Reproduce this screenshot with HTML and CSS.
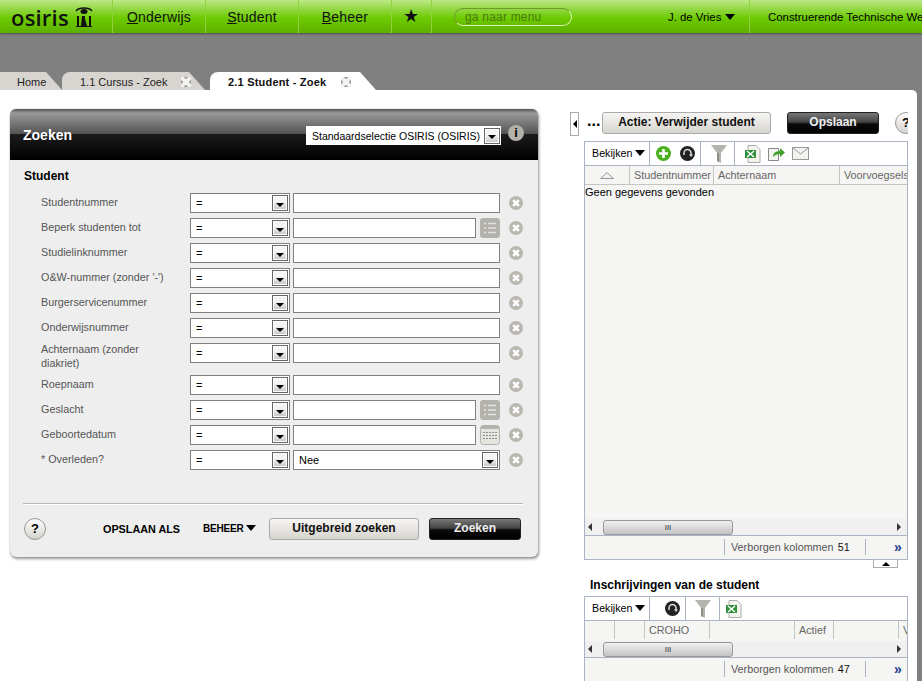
FILE: index.html
```html
<!DOCTYPE html>
<html lang="en">
<head>
    <meta charset="UTF-8">
    <title>Osiris - Student zoeken</title>
    <link rel="stylesheet" href="styles.css">
</head>
<body>
    <svg class="defs" width="0" height="0">
        <symbol id="i-clear" viewBox="0 0 14 14">
            <circle cx="7" cy="7" r="7" fill="#b9b7af"/>
            <path d="M4.2 4.2l5.6 5.6M9.800 4.2l-5.600 5.600" stroke="#fff" stroke-width="2.600"/>
        </symbol>
        <symbol id="i-list" viewBox="0 0 20 20">
            <rect width="20" height="20" rx="3" fill="#b4b2ac"/>
            <path d="M4 5.500h2M4 10h2M4 14.500h2M8 5.500h8M8 10h8M8 14.500h8" stroke="#e2e2e0" stroke-width="1.500"/>
        </symbol>
        <symbol id="i-cal" viewBox="0 0 20 20">
            <rect x=".5" y=".5" width="19" height="19" rx="3" fill="#e6e4de" stroke="#b4b2ac"/>
            <rect x="1" y="1" width="18" height="3" fill="#b4b2ac"/>
            <path d="M3 7.500h14M3 10.500h14M3 13.500h14" stroke="#8e8e8e" stroke-width="1" stroke-dasharray="2 1"/>
        </symbol>
        <symbol id="i-reload" viewBox="0 0 15 15">
            <circle cx="7.500" cy="7.500" r="7.500" fill="#222"/>
            <path d="M4 9V7a3.500 3.500 0 0 1 7 0v2" fill="none" stroke="#ddd" stroke-width="1.500"/>
            <path d="M9 8.500h4l-2 2.500z" fill="#ddd"/>
        </symbol>
        <symbol id="i-filter" viewBox="0 0 16 18">
            <path d="M0 0h16L10 8v10l-4-2V8z" fill="#b4b4ae"/>
            <path d="M6 8h2v9l-2-1z" fill="#8e8e88"/>
        </symbol>
        <symbol id="i-excel" viewBox="0 0 16 18">
            <path d="M3 .5h8l4 4v13H3z" fill="#f4f4f0" stroke="#aaa"/>
            <path d="M0 5h11v8H0z" fill="#2f8f3c"/>
            <path d="M2 6l7 6M9 6l-7 6" stroke="#fff" stroke-width="1.500"/>
        </symbol>
    </svg>

    <header class="topbar">
        <div class="logo">
            <span class="logo-text">osiris</span>
            <svg class="logo-mark" width="18" height="21" viewBox="0 0 18 21">
                <path d="M1 5C4 1 14 1 17 5" fill="none" stroke="#111" stroke-width="1.500"/>
                <ellipse cx="9" cy="5.500" rx="3.500" ry="2.500" fill="#111"/>
                <path d="M2 20V10h2v10zM6 20l1-10h3v3l2 7zM14 20v-10h2v10zM1 20h16v1H1z" fill="#111"/>
            </svg>
        </div>
        <a class="nav-item"><u>O</u>nderwijs</a>
        <a class="nav-item"><u>S</u>tudent</a>
        <a class="nav-item"><u>B</u>eheer</a>
        <a class="nav-item nav-star">★</a>
        <div class="menu-search">ga naar menu</div>
        <div class="user">J. de Vries <span class="caret"></span></div>
        <div class="faculty">Construerende Technische Wetenschappen</div>
    </header>

    <nav class="tabs">
        <div class="tab tab-home">Home</div>
        <div class="tab tab-course">1.1 Cursus - Zoek <span class="tab-close"></span></div>
        <div class="tab tab-active">2.1 Student - Zoek <span class="tab-close"></span></div>
    </nav>

    <main class="main">
        <section class="search-panel">
            <div class="panel-head">
                <h1>Zoeken</h1>
                <div class="preset">
                    <span>Standaardselectie OSIRIS (OSIRIS)</span>
                    <span class="drop"></span>
                </div>
                <span class="info">i</span>
            </div>
            <div class="panel-body">
                <h2>Student</h2>

                <div class="row">
                    <label>Studentnummer</label>
                    <div class="select op">=<span class="drop"></span></div>
                    <div class="field"></div>
                    <svg class="clear"><use href="#i-clear"/></svg>
                </div>
                <div class="row">
                    <label>Beperk studenten tot</label>
                    <div class="select op">=<span class="drop"></span></div>
                    <div class="field short"></div>
                    <svg class="tool"><use href="#i-list"/></svg>
                    <svg class="clear"><use href="#i-clear"/></svg>
                </div>
                <div class="row">
                    <label>Studielinknummer</label>
                    <div class="select op">=<span class="drop"></span></div>
                    <div class="field"></div>
                    <svg class="clear"><use href="#i-clear"/></svg>
                </div>
                <div class="row">
                    <label>O&amp;W-nummer (zonder '-')</label>
                    <div class="select op">=<span class="drop"></span></div>
                    <div class="field"></div>
                    <svg class="clear"><use href="#i-clear"/></svg>
                </div>
                <div class="row">
                    <label>Burgerservicenummer</label>
                    <div class="select op">=<span class="drop"></span></div>
                    <div class="field"></div>
                    <svg class="clear"><use href="#i-clear"/></svg>
                </div>
                <div class="row">
                    <label>Onderwijsnummer</label>
                    <div class="select op">=<span class="drop"></span></div>
                    <div class="field"></div>
                    <svg class="clear"><use href="#i-clear"/></svg>
                </div>
                <div class="row row-tall">
                    <label>Achternaam (zonder diakriet)</label>
                    <div class="select op">=<span class="drop"></span></div>
                    <div class="field"></div>
                    <svg class="clear"><use href="#i-clear"/></svg>
                </div>
                <div class="row">
                    <label>Roepnaam</label>
                    <div class="select op">=<span class="drop"></span></div>
                    <div class="field"></div>
                    <svg class="clear"><use href="#i-clear"/></svg>
                </div>
                <div class="row">
                    <label>Geslacht</label>
                    <div class="select op">=<span class="drop"></span></div>
                    <div class="field short"></div>
                    <svg class="tool"><use href="#i-list"/></svg>
                    <svg class="clear"><use href="#i-clear"/></svg>
                </div>
                <div class="row">
                    <label>Geboortedatum</label>
                    <div class="select op">=<span class="drop"></span></div>
                    <div class="field short"></div>
                    <svg class="tool"><use href="#i-cal"/></svg>
                    <svg class="clear"><use href="#i-clear"/></svg>
                </div>
                <div class="row">
                    <label>* Overleden?</label>
                    <div class="select op">=<span class="drop"></span></div>
                    <div class="select value">Nee<span class="drop"></span></div>
                    <svg class="clear"><use href="#i-clear"/></svg>
                </div>

                <div class="panel-foot">
                    <span class="help">?</span>
                    <a class="link link-save">OPSLAAN ALS</a>
                    <a class="link link-manage">BEHEER <span class="caret"></span></a>
                    <button class="btn btn-light btn-extended">Uitgebreid zoeken</button>
                    <button class="btn btn-dark btn-search">Zoeken</button>
                </div>
            </div>
        </section>

        <section class="side">
            <div class="action-row">
                <span class="collapse"></span>
                <span class="dots">...</span>
                <button class="btn btn-light btn-action">Actie: Verwijder student</button>
                <button class="btn btn-dark btn-save">Opslaan</button>
                <span class="help help-side">?</span>
            </div>

            <div class="grid grid-main">
                <div class="grid-tools">
                    <span class="view">Bekijken <span class="caret"></span></span>
                    <span class="tool-group group-a">
                        <svg width="15" height="15" viewBox="0 0 15 15">
                            <circle cx="7.500" cy="7.500" r="7.500" fill="#4caf1e"/>
                            <path d="M7.500 3v9M3 7.500h9" stroke="#fff" stroke-width="2.600"/>
                        </svg>
                        <svg class="icon-15"><use href="#i-reload"/></svg>
                    </span>
                    <span class="tool-group group-b"><svg class="icon-filter"><use href="#i-filter"/></svg></span>
                    <span class="tool-group group-c">
                        <svg class="icon-filter"><use href="#i-excel"/></svg>
                        <svg width="17" height="15" viewBox="0 0 17 15">
                            <path d="M.5 2.500h10v12H.5z" fill="#f4f4f0" stroke="#888"/>
                            <path d="M5 11c0-4 3-6 7-6V2l5 4.500L12 11V8c-3 0-5 1-7 3z" fill="#3fa02c"/>
                        </svg>
                        <svg width="17" height="13" viewBox="0 0 17 13">
                            <rect x=".5" y=".5" width="16" height="12" fill="#f2f2ee" stroke="#999"/>
                            <path d="M1 1l7.500 6L16 1" fill="none" stroke="#999"/>
                        </svg>
                    </span>
                </div>
                <div class="grid-head">
                    <span class="col col-sort">
                        <svg width="14" height="7" viewBox="0 0 14 7">
                            <path d="M.5 6.500L7 .5l6.500 6z" fill="#f0f0f0" stroke="#999"/>
                        </svg>
                    </span>
                    <span class="col col-number">Studentnummer</span>
                    <span class="col col-name">Achternaam</span>
                    <span class="col col-prefix">Voorvoegsels</span>
                </div>
                <div class="grid-body">Geen gegevens gevonden</div>
                <div class="scroller">
                    <span class="arrow arrow-left"></span>
                    <span class="thumb">III</span>
                    <span class="arrow arrow-right"></span>
                </div>
                <div class="grid-foot">
                    <span class="hidden-cols">Verborgen kolommen <b>51</b></span>
                    <span class="more">»</span>
                </div>
            </div>
            <div class="expand"><span></span></div>

            <h3>Inschrijvingen van de student</h3>

            <div class="grid grid-sub">
                <div class="grid-tools">
                    <span class="view">Bekijken <span class="caret"></span></span>
                    <span class="tool-group group-d"><svg class="icon-15"><use href="#i-reload"/></svg></span>
                    <span class="tool-group group-e"><svg class="icon-filter"><use href="#i-filter"/></svg></span>
                    <span class="tool-group group-f"><svg class="icon-filter"><use href="#i-excel"/></svg></span>
                </div>
                <div class="grid-head">
                    <span class="col col-a"></span>
                    <span class="col col-b"></span>
                    <span class="col col-c">CROHO</span>
                    <span class="col col-d"></span>
                    <span class="col col-e">Actief</span>
                    <span class="col col-f"></span>
                    <span class="col col-g">Volg</span>
                </div>
                <div class="scroller">
                    <span class="arrow arrow-left"></span>
                    <span class="thumb">III</span>
                    <span class="arrow arrow-right"></span>
                </div>
                <div class="grid-foot">
                    <span class="hidden-cols">Verborgen kolommen <b>47</b></span>
                    <span class="more">»</span>
                </div>
            </div>
        </section>
    </main>
</body>
</html>
```

FILE: styles.css
```css
* {
    margin: 0;
    padding: 0;
    box-sizing: border-box;
}
html, body {
    height: 100%;
    overflow: hidden;
}
body {
    background-color: #808080;
    font-family: "Liberation Sans", Arial, sans-serif;
    font-size: 12px;
    color: #000;
}
.defs {
    display: block;
    height: 0;
}

/* Top bar */
.topbar {
    display: flex;
    align-items: center;
    height: 33px;
    white-space: nowrap;
    overflow: hidden;
    background: linear-gradient(#bde887 0, #8fd63e 30%, #6ccb00 55%, #5eb000 100%);
    box-shadow: 0 1px 2px rgba(0, 0, 0, 0.4);
}
.topbar > * {
    flex: none;
}
.logo {
    display: flex;
    align-items: center;
    width: 112px;
    height: 33px;
    padding-left: 11px;
}
.logo-text {
    font-family: "Open Sans", sans-serif;
    font-size: 22px;
    font-weight: 600;
    letter-spacing: 0.2px;
    color: #111;
}
.logo-mark {
    margin-left: 6px;
}
.nav-item {
    display: block;
    width: 93px;
    height: 33px;
    line-height: 35px;
    text-align: center;
    font-size: 14px;
    letter-spacing: 0.2px;
    border-left: 1px solid #8fd13f;
    color: #111;
}
.nav-star {
    width: 41px;
    font-size: 18px;
    line-height: 33px;
    border-right: 1px solid #8fd13f;
}
.menu-search {
    width: 118px;
    height: 18px;
    margin-left: 22px;
    padding-left: 10px;
    line-height: 17px;
    color: #4a7a0c;
    font-size: 12px;
    letter-spacing: 0.2px;
    border: 1px solid;
    border-color: #6f9a2c #d8f2ad #d8f2ad #6f9a2c;
    border-radius: 9px;
}
.user {
    width: 178px;
    height: 33px;
    line-height: 34px;
    padding-left: 96px;
    font-size: 11.400px;
    border-right: 1px solid #8fd13f;
    margin-right: 18px;
}
.faculty {
    font-size: 11.400px;
}
.caret {
    display: inline-block;
    width: 0;
    height: 0;
    vertical-align: 1px;
    border-left: 5px solid transparent;
    border-right: 5px solid transparent;
    border-top: 6px solid #000;
}

/* Tabs */
.tabs {
    display: flex;
    height: 18px;
    margin-top: 39px;
    line-height: 20px;
    font-size: 11px;
}
.tab {
    height: 18px;
    background-color: #d8d5d0;
    color: #222;
    clip-path: polygon(0 0, calc(100% - 16px) 0, 100% 100%, 0 100%);
    border-top-left-radius: 8px;
    white-space: nowrap;
}
.tab-home {
    width: 62px;
    padding-left: 17px;
    border-top-left-radius: 0;
}
.tab-course {
    width: 143px;
    padding-left: 18px;
}
.tab-active {
    width: 166px;
    margin-left: 5px;
    padding-left: 18px;
    background-color: #fff;
    font-weight: bold;
    letter-spacing: 0.2px;
    color: #111;
}
.tab-close {
    display: inline-block;
    width: 10px;
    height: 10px;
    margin-left: 11px;
    vertical-align: -1px;
    background: linear-gradient(45deg, transparent 38%, #f2f2f2 38%, #f2f2f2 62%, transparent 62%),
        linear-gradient(-45deg, transparent 38%, #f2f2f2 38%, #f2f2f2 62%, transparent 62%),
        #a6a6a2;
}

/* Main area */
.main {
    display: flex;
    align-items: flex-start;
    height: 591px;
    margin-right: 5px;
    padding: 19px 0 0 10px;
    background-color: #fff;
    border-top-right-radius: 5px;
    overflow: hidden;
}

/* Search panel */
.search-panel {
    flex: none;
    width: 528px;
    height: 448px;
    border-radius: 6px;
    background-color: #eee;
    box-shadow: 1px 2px 3px rgba(0, 0, 0, 0.4), 0 0 1px #6d7a8c;
}
.panel-head {
    display: flex;
    align-items: flex-start;
    height: 51px;
    padding: 17px 14px 0 13px;
    border-radius: 6px 6px 0 0;
    background: linear-gradient(#555 0, #999 8%, #555 48%, #1c1c1c 49%, #000 100%);
}
.panel-head h1 {
    flex: 1;
    padding-top: 1px;
    font-size: 14px;
    color: #fff;
}
.preset {
    flex: none;
    display: flex;
    align-items: center;
    justify-content: space-between;
    width: 195px;
    height: 19px;
    padding: 0 1px 0 6px;
    background-color: #fff;
    white-space: nowrap;
    font-size: 10.500px;
}
.info {
    flex: none;
    width: 16px;
    height: 16px;
    margin: -1px 0 0 7px;
    border-radius: 50%;
    background-color: #b3b0a8;
    line-height: 16px;
    text-align: center;
    font-weight: bold;
    font-size: 13px;
    color: #000;
}
.panel-body {
    padding: 9px 15px 0 13px;
}
.panel-body h2 {
    height: 24px;
    padding-left: 1px;
    font-size: 12px;
}
.row {
    display: flex;
    align-items: flex-start;
    margin-bottom: 5px;
    font-size: 11px;
}
.row label {
    flex: none;
    width: 167px;
    padding: 2px 18px 0 18px;
    line-height: 14px;
    font-size: 10.800px;
    color: #555;
}
.row-tall label {
    height: 28px;
    margin-top: -1px;
    padding-top: 0;
}
.select,
.field {
    height: 20px;
    border: 1px solid #808080;
    background-color: #fff;
}
.select {
    display: flex;
    align-items: center;
    justify-content: space-between;
    padding: 0 1px 0 5px;
    font-size: 11px;
}
.op {
    flex: none;
    width: 100px;
    margin-right: 3px;
}
.field {
    flex: none;
    width: 207px;
    margin-right: 9px;
}
.field.short {
    width: 183px;
    margin-right: 4px;
}
.value {
    flex: none;
    width: 207px;
    margin-right: 9px;
}
.drop {
    flex: none;
    display: flex;
    align-items: center;
    justify-content: center;
    width: 16px;
    height: 16px;
    border: 1px solid #666;
    outline: 1px solid #fff;
    outline-offset: -2px;
    background: linear-gradient(#f4f4f4 40%, #c4c4c4 100%);
}
.drop::after {
    content: "";
    margin-top: 3px;
    border-left: 4px solid transparent;
    border-right: 4px solid transparent;
    border-top: 4px solid #000;
}
.tool {
    flex: none;
    width: 20px;
    height: 20px;
    margin-right: 9px;
}
.clear {
    flex: none;
    width: 14px;
    height: 14px;
    margin-top: 3px;
}
.panel-foot {
    display: flex;
    align-items: flex-start;
    height: 54px;
    margin-top: 33px;
    border-top: 1px solid #b8b8b8;
    box-shadow: inset 0 1px 0 #fff;
    padding: 14px 0 0 1px;
}
.help {
    flex: none;
    width: 22px;
    height: 22px;
    border: 1px solid #999;
    border-radius: 50%;
    background: linear-gradient(#fff, #d4d2cc);
    line-height: 19px;
    text-align: center;
    font-weight: bold;
    font-size: 13px;
}
.link {
    flex: none;
    font-weight: bold;
    line-height: 22px;
    white-space: nowrap;
}
.link-save {
    width: 77px;
    margin-left: 57px;
    font-size: 10.800px;
}
.link-manage {
    width: 53px;
    margin-left: 23px;
    font-size: 10px;
    letter-spacing: -0.2px;
}
.btn {
    flex: none;
    height: 22px;
    border-radius: 3px;
    font-family: inherit;
    font-weight: bold;
    font-size: 12px;
    line-height: 18px;
    padding-bottom: 3px;
}
.btn-light {
    border: 1px solid #aaa;
    background: linear-gradient(#f6f5f3, #d6d4ce);
    color: #111;
}
.btn-dark {
    border: 1px solid #222;
    background: linear-gradient(#777 0, #444 45%, #0a0a0a 55%, #000 100%);
    color: #eee;
}
.btn-extended {
    width: 150px;
    margin-left: 13px;
}
.btn-search {
    width: 92px;
    margin-left: 10px;
}

/* Right column */
.side {
    flex: none;
    width: 338px;
    margin-left: 32px;
    overflow: hidden;
}
.action-row {
    display: flex;
    align-items: flex-start;
    height: 29px;
    margin-top: 3px;
}
.collapse {
    flex: none;
    display: flex;
    align-items: center;
    justify-content: center;
    width: 9px;
    height: 24px;
    border: 1px solid #aaa;
}
.collapse::after {
    content: "";
    border-top: 4px solid transparent;
    border-bottom: 4px solid transparent;
    border-right: 4px solid #000;
}
.dots {
    flex: none;
    width: 23px;
    padding-left: 8px;
    font-size: 16px;
    font-weight: bold;
    line-height: 18px;
}
.btn-action {
    width: 169px;
}
.btn-save {
    width: 92px;
    margin-left: 16px;
}
.help-side {
    margin-left: 16px;
}
.grid {
    width: 324px;
    margin-left: 14px;
    border: 1px solid #aab4c4;
    background-color: #f5f5f3;
    overflow: hidden;
}
.grid-main {
    height: 419px;
}
.grid-tools {
    display: flex;
    align-items: center;
    height: 24px;
    background-color: #fff;
    border-bottom: 1px solid #aab4c4;
}
.view {
    flex: none;
    width: 64px;
    padding: 0 0 1px 7px;
    font-size: 10.700px;
    white-space: nowrap;
}
.tool-group {
    flex: none;
    display: flex;
    align-items: center;
    height: 23px;
    border-left: 1px solid #aab4c4;
}
.icon-15 {
    width: 15px;
    height: 15px;
}
.icon-filter {
    width: 16px;
    height: 18px;
}
.group-a {
    width: 51px;
    padding-left: 6px;
    gap: 9px;
}
.group-b {
    width: 34px;
    padding-left: 10px;
}
.group-c {
    padding-left: 10px;
    gap: 7px;
}
.group-d {
    width: 36px;
    padding-left: 15px;
}
.group-e {
    width: 34px;
    padding-left: 9px;
}
.group-f {
    padding-left: 6px;
}
.grid-head {
    display: flex;
    height: 19px;
    border-bottom: 1px solid #c4c4c0;
    font-size: 10.800px;
    color: #666;
    white-space: nowrap;
}
.grid-sub .grid-head {
    height: 20px;
    border-bottom: 0;
}
.col {
    flex: none;
    height: 18px;
    padding-left: 4px;
    line-height: 18px;
    border-right: 1px solid #c4c4c0;
}
.col-sort {
    display: flex;
    align-items: center;
    justify-content: center;
    width: 45px;
    padding: 0;
}
.col-number { width: 84px; }
.col-name { width: 126px; }
.col-prefix { width: 100px; border-right: 0; }
.col-a { width: 30px; }
.col-b { width: 30px; }
.col-c { width: 65px; }
.col-d { width: 85px; }
.col-e { width: 39px; }
.col-f { width: 65px; }
.col-g { width: 40px; border-right: 0; }
.grid-body {
    height: 334px;
    padding-top: 1px;
    font-size: 11px;
    line-height: 13px;
}
.scroller {
    display: flex;
    align-items: center;
    height: 16px;
    padding: 0 6px 0 3px;
    background-color: #f0f0f0;
}
.arrow {
    flex: none;
    width: 0;
    height: 0;
    border-top: 4px solid transparent;
    border-bottom: 4px solid transparent;
}
.arrow-left {
    border-right: 4px solid #333;
}
.arrow-right {
    margin-left: auto;
    border-left: 4px solid #333;
}
.thumb {
    width: 130px;
    height: 15px;
    margin-left: 11px;
    border: 1px solid #999;
    border-radius: 3px;
    background: linear-gradient(#f0f0f0, #c4c4c4);
    text-align: center;
    font-size: 8px;
    line-height: 13px;
    color: #333;
}
.grid-foot {
    display: flex;
    align-items: center;
    height: 24px;
    padding-bottom: 2px;
    border-top: 1px solid #aab4c4;
    font-size: 10.800px;
}
.hidden-cols {
    flex: none;
    width: 142px;
    height: 16px;
    margin-left: 139px;
    padding-left: 6px;
    line-height: 16px;
    color: #555;
    white-space: nowrap;
    border-left: 1px solid #aab4c4;
    border-right: 1px solid #aab4c4;
}
.hidden-cols b {
    margin-left: 1px;
    font-weight: normal;
    color: #111;
}
.more {
    margin-left: 28px;
    font-size: 14px;
    line-height: 16px;
    font-weight: bold;
    color: #23408f;
}
.expand {
    display: flex;
    justify-content: center;
    align-items: center;
    width: 25px;
    height: 8px;
    margin-left: 303px;
    border: 1px solid #aaa;
    border-top: 0;
}
.expand span {
    border-left: 4px solid transparent;
    border-right: 4px solid transparent;
    border-bottom: 4px solid #000;
}
.side h3 {
    height: 18px;
    margin: 10px 0 0 20px;
    font-size: 12px;
    line-height: 15px;
}
.grid-sub {
    height: 90px;
}
```
